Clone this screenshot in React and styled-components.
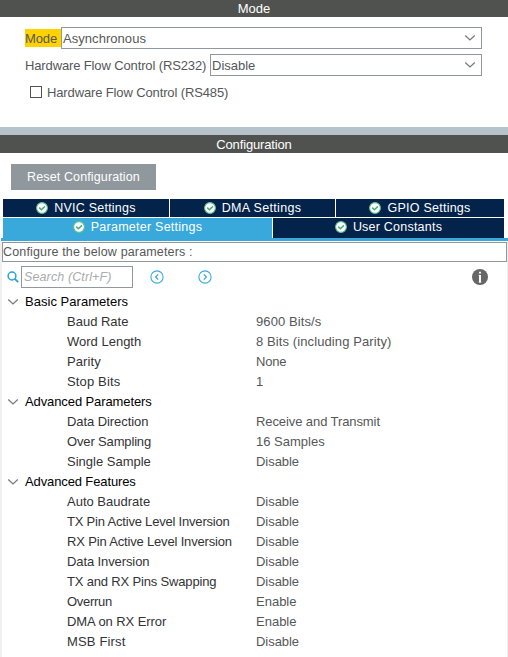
import React from "react";
import styled, { createGlobalStyle } from "styled-components";

const Global = createGlobalStyle`
  * { box-sizing: border-box; }
  body {
    margin: 0;
    background: #fff;
    color: #555759;
    font: 13px/19px "Liberation Sans", Arial, sans-serif;
    overflow: hidden;
  }
`;

const Window = styled.main`
  width: 508px;
  height: 657px;
  display: flex;
  flex-direction: column;
  overflow: hidden;
`;

const Text = styled.span`
  white-space: pre;
  letter-spacing: ${(p) => p.$track || 0}px;
`;

const TitleBar = styled.header`
  flex: none;
  height: ${(p) => p.$height}px;
  line-height: ${(p) => p.$line}px;
  background: #50524f;
  color: #fff;
  text-align: center;
`;

const ModePanel = styled.section`
  height: 110px;
  flex: none;
  padding: 10px 26px 0 25px;
  display: flex;
  flex-direction: column;
`;

const Field = styled.div`
  display: flex;
  align-items: center;
  height: 22px;
  margin-bottom: 5px;
`;

const FieldLabel = styled.label`
  flex: none;
  width: ${(p) => p.$width}px;
  height: 18px;
  background: ${(p) => (p.$marked ? "#ffd200" : "transparent")};
`;

const Select = styled.div`
  flex: 1;
  height: 22px;
  padding: 0 5px 0 1px;
  display: flex;
  justify-content: space-between;
  line-height: 21px;
  border: 1px solid #90989e;
`;

const CheckRow = styled.label`
  display: flex;
  gap: 5px;
  height: 22px;
  padding-left: 5px;
  line-height: 23px;
`;

const CheckBox = styled.span`
  width: 12px;
  height: 12px;
  margin-top: 5px;
  border: 1px solid #505254;
`;

const Splitter = styled.div`
  flex: none;
  height: 8px;
  background: #b7c3ca;
`;

const ResetButton = styled.button`
  flex: none;
  display: flex;
  justify-content: center;
  width: 145px;
  height: 26px;
  margin: 11px 0 9px 11px;
  padding: 0;
  border: 0;
  background: #90989e;
  color: #fff;
  font: inherit;
  font-size: 12.5px;
  line-height: 27px;
`;

const TabRow = styled.div`
  flex: none;
  display: grid;
  grid-template-columns: ${(p) => p.$columns};
  column-gap: 1px;
  height: ${(p) => p.$height}px;
  margin: 0 4px ${(p) => p.$gap || 0}px 3px;
`;

const Tab = styled.div`
  display: flex;
  justify-content: center;
  gap: 6px;
  height: 100%;
  overflow: hidden;
  font-size: 12.5px;
  color: #fff;
  background: ${(p) => (p.$active ? "#39a9dc" : "#03234b")};
`;

const TabRule = styled.div`
  flex: none;
  height: 3px;
  margin-left: 1px;
  background: #39a9dc;
`;

const Content = styled.section`
  flex: 1;
  border-left: 2px solid #f0f0f0;
  border-right: 1px solid #f0f0f0;
  padding-top: 1px;
`;

const Hint = styled.div`
  height: 20px;
  border: 1px solid #90989e;
  font-size: 12.5px;
`;

const ToolRow = styled.div`
  display: flex;
  align-items: center;
  height: 30px;
  padding: 0 19px 0 5px;
`;

const SearchField = styled.div`
  width: 112px;
  height: 22px;
  margin: 0 17px 0 2px;
  padding-left: 2px;
  font-size: 12.5px;
  line-height: 21px;
  border: 1px solid #90989e;
  color: #aaacae;
  font-style: italic;
`;

const NavButtons = styled.div`
  display: flex;
  gap: 34px;
  flex: 1;
`;

const Icon = styled.svg`
  display: block;
  flex: none;
  fill: none;
  align-self: center;
`;

const CheckIcon = styled(Icon)`
  align-self: flex-start;
  margin-top: 3px;
`;

const Group = styled.div`
  display: flex;
  gap: 6px;
  height: 20px;
  padding-left: 5px;
  line-height: 19px;
  color: #000;
`;

const Param = styled.div`
  display: grid;
  grid-template-columns: 189px 1fr;
  height: 20px;
  padding-left: 65px;
  line-height: 19px;
  color: #333335;
`;

const Value = styled(Text)`
  color: #555759;
`;

const Chevron = () => (
  <Icon width="12" height="8" viewBox="0 0 12 8">
    <path d="M1.2 1.5 6 6 10.8 1.5" stroke="#77797b" strokeWidth="1.25" />
  </Icon>
);

const Check = () => (
  <CheckIcon width="12" height="12" viewBox="0 0 12 12">
    <circle cx="6" cy="6" r="5.4" fill="#fff" stroke="#5fc08b" strokeWidth="1.1" />
    <path d="M3.2 5.6 5.4 7.7 8.9 4.4" stroke="#45ae78" strokeWidth="1.5" />
  </CheckIcon>
);

const Search = () => (
  <Icon width="12" height="12" viewBox="0 0 12 12">
    <circle cx="5" cy="5" r="3.9" stroke="#2b9fd6" strokeWidth="1.5" />
    <path d="M7.8 7.8 11.2 11.2" stroke="#2b9fd6" strokeWidth="1.8" />
  </Icon>
);

const Arrow = ({ right }) => (
  <Icon width="14" height="14" viewBox="0 0 14 14">
    <circle cx="7" cy="7" r="6.1" stroke="#39a9dc" strokeWidth="1.1" />
    <path d={right ? "M5.8 4.4 8.4 7 5.8 9.6" : "M8.2 4.4 5.6 7 8.2 9.6"} stroke="#39a9dc" strokeWidth="1.3" />
  </Icon>
);

const Info = () => (
  <Icon width="16" height="16" viewBox="0 0 16 16">
    <circle cx="8" cy="8" r="8" fill="#666" />
    <path d="M8 5.9v7.6M8 2.7v1.9" stroke="#fff" strokeWidth="1.9" />
    <path d="M6.4 6.3H8M6.4 13.2h3.2" stroke="#fff" strokeOpacity=".6" strokeWidth=".8" />
  </Icon>
);

// Each entry is a text followed by its letter spacing in px.
const groups = [
  [["Basic Parameters", 0.03], [
    [["Baud Rate", 0], ["9600 Bits/s", 0.1]],
    [["Word Length", 0], ["8 Bits (including Parity)", 0.1]],
    [["Parity", 0.1], ["None", -0.2]],
    [["Stop Bits", 0.15], ["1", 0]],
  ]],
  [["Advanced Parameters", -0.1], [
    [["Data Direction", -0.07], ["Receive and Transmit", -0.09]],
    [["Over Sampling", -0.15], ["16 Samples", 0]],
    [["Single Sample", 0], ["Disable", -0.05]],
  ]],
  [["Advanced Features", -0.12], [
    [["Auto Baudrate", 0], ["Disable", -0.05]],
    [["TX Pin Active Level Inversion", -0.2], ["Disable", -0.05]],
    [["RX Pin Active Level Inversion", -0.17], ["Disable", -0.05]],
    [["Data Inversion", -0.1], ["Disable", -0.05]],
    [["TX and RX Pins Swapping", -0.17], ["Disable", -0.05]],
    [["Overrun", -0.3], ["Enable", 0]],
    [["DMA on RX Error", -0.08], ["Enable", 0]],
    [["MSB First", 0.15], ["Disable", -0.05]],
  ]],
];

export default function App() {
  return (
    <Window>
      <Global />
      <TitleBar $height={17} $line={17}><Text $track={0}>Mode</Text></TitleBar>
      <ModePanel>
        <Field>
          <FieldLabel $width={36} $marked><Text $track={-0.1}>Mode</Text></FieldLabel>
          <Select><Text $track={0.05}>Asynchronous</Text><Chevron /></Select>
        </Field>
        <Field>
          <FieldLabel $width={185}><Text $track={-0.13}>Hardware Flow Control (RS232)</Text></FieldLabel>
          <Select><Text>Disable</Text><Chevron /></Select>
        </Field>
        <CheckRow><CheckBox /><Text $track={-0.13}>Hardware Flow Control (RS485)</Text></CheckRow>
      </ModePanel>
      <Splitter />
      <TitleBar $height={18} $line={19}><Text $track={-0.15}>Configuration</Text></TitleBar>
      <ResetButton><Text $track={0.12}>Reset Configuration</Text></ResetButton>
      <TabRow $columns="166px 165px 1fr" $height={18} $gap={1}>
        <Tab><Check /><Text $track={0.22}>NVIC Settings</Text></Tab>
        <Tab><Check /><Text $track={0.33}>DMA Settings</Text></Tab>
        <Tab><Check /><Text $track={0.25}>GPIO Settings</Text></Tab>
      </TabRow>
      <TabRow $columns="269px 1fr" $height={20}>
        <Tab $active><Check /><Text $track={0.25}>Parameter Settings</Text></Tab>
        <Tab><Check /><Text $track={0.22}>User Constants</Text></Tab>
      </TabRow>
      <TabRule />
      <Content>
        <Hint><Text $track={0.15}>Configure the below parameters :</Text></Hint>
        <ToolRow>
          <Search />
          <SearchField><Text $track={0.12}>Search (Ctrl+F)</Text></SearchField>
          <NavButtons><Arrow /><Arrow right /></NavButtons>
          <Info />
        </ToolRow>
        {groups.map(([[name, track], rows]) => (
          <React.Fragment key={name}>
            <Group><Chevron /><Text $track={track}>{name}</Text></Group>
            {rows.map(([[label, labelTrack], [value, valueTrack]]) => (
              <Param key={label}>
                <Text $track={labelTrack}>{label}</Text>
                <Value $track={valueTrack}>{value}</Value>
              </Param>
            ))}
          </React.Fragment>
        ))}
      </Content>
    </Window>
  );
}
